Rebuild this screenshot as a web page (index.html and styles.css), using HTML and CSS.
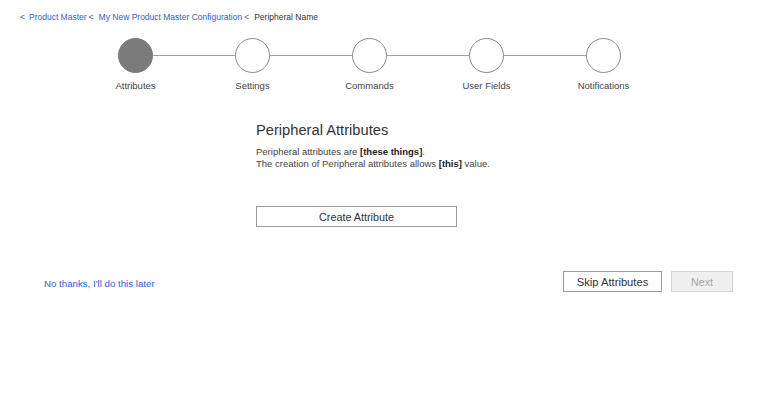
FILE: index.html
```html
<!DOCTYPE html>
<html>
<head>
<meta charset="utf-8">
<link rel="stylesheet" href="styles.css">
</head>
<body>
<nav class="crumbs">
  <span class="sep">&lt;</span><a class="link">Product Master</a><span class="sep">&lt;</span><a class="link">My New Product Master Configuration</a><span class="sep gray">&lt;</span><span class="current">Peripheral Name</span>
</nav>
<div class="stepper">
  <div class="step active"><div class="circle"></div><div class="label">Attributes</div></div>
  <div class="step"><div class="circle"></div><div class="label">Settings</div></div>
  <div class="step"><div class="circle"></div><div class="label">Commands</div></div>
  <div class="step"><div class="circle"></div><div class="label">User Fields</div></div>
  <div class="step last"><div class="circle"></div><div class="label">Notifications</div></div>
</div>
<section class="content">
  <h1 class="title">Peripheral Attributes</h1>
  <p class="desc">Peripheral attributes are <b>[these things]</b>.<br>The creation of Peripheral attributes allows <b>[this]</b> value.</p>
  <button class="btn create">Create Attribute</button>
</section>
<footer class="actions">
  <a class="link later">No thanks, I'll do this later</a>
  <div class="right">
    <button class="btn skip">Skip Attributes</button>
    <button class="btn next" disabled>Next</button>
  </div>
</footer>
</body>
</html>
```
FILE: styles.css
```css
* { box-sizing: border-box; }
body {
  margin: 0;
  background: #fff;
  font-family: "Liberation Sans", Arial, sans-serif;
  color: #333;
}
.crumbs {
  padding: 11px 0 0 20px;
  font-size: 8.5px;
  line-height: 12px;
  height: 23px;
}
.crumbs .sep { color: #2f62d4; margin-right: 4px; }
.crumbs .sep.gray { color: #666; margin-left: 5px; margin-right: 5px; }
.crumbs .link + .sep { margin-left: 2px; margin-right: 5px; }
.link { color: #2f62d4; text-decoration: none; cursor: pointer; }
.current { color: #333; }

.stepper {
  display: flex;
  margin-left: 77px;
  margin-top: 15px;
}
.step {
  width: 117px;
  position: relative;
  display: flex;
  flex-direction: column;
  align-items: center;
}
.step::after {
  content: "";
  position: absolute;
  left: 58.5px;
  top: 17px;
  width: 117px;
  height: 1px;
  background: #a0a0a0;
}
.step.last::after { display: none; }
.circle {
  width: 35px;
  height: 35px;
  border-radius: 50%;
  border: 1.5px solid #8a8a8a;
  background: #fff;
  position: relative;
  z-index: 1;
}
.step.active .circle { background: #7b7b7b; border-color: #7b7b7b; }
.label {
  margin-top: 7px;
  font-size: 9.5px;
  line-height: 12px;
  color: #444;
}

.content {
  margin-left: 256px;
  margin-top: 28px;
}
.title {
  margin: 0;
  font-weight: normal;
  font-size: 14.7px;
  line-height: 20px;
  color: #333;
}
.desc {
  margin: 6px 0 0 0;
  font-size: 9.5px;
  line-height: 12px;
  color: #444;
}
.desc b { color: #222; }
.btn {
  font-family: "Liberation Sans", Arial, sans-serif;
  background: #fff;
  border: 1px solid #9a9a9a;
  color: #333;
  font-size: 10.8px;
  height: 21px;
  padding: 0;
}
.create {
  margin-top: 36px;
  width: 201px;
  display: block;
}
.actions {
  display: flex;
  align-items: center;
  justify-content: space-between;
  margin-top: 44px;
  padding: 0 27px 0 44px;
}
.later { font-size: 9.7px; margin-top: 3px; }
.right { display: flex; gap: 9px; }
.skip { width: 99px; font-size: 11.2px; }
.next {
  width: 62px;
  background: #efefef;
  border-color: #d4d4d4;
  color: #a8a8a8;
}
```
